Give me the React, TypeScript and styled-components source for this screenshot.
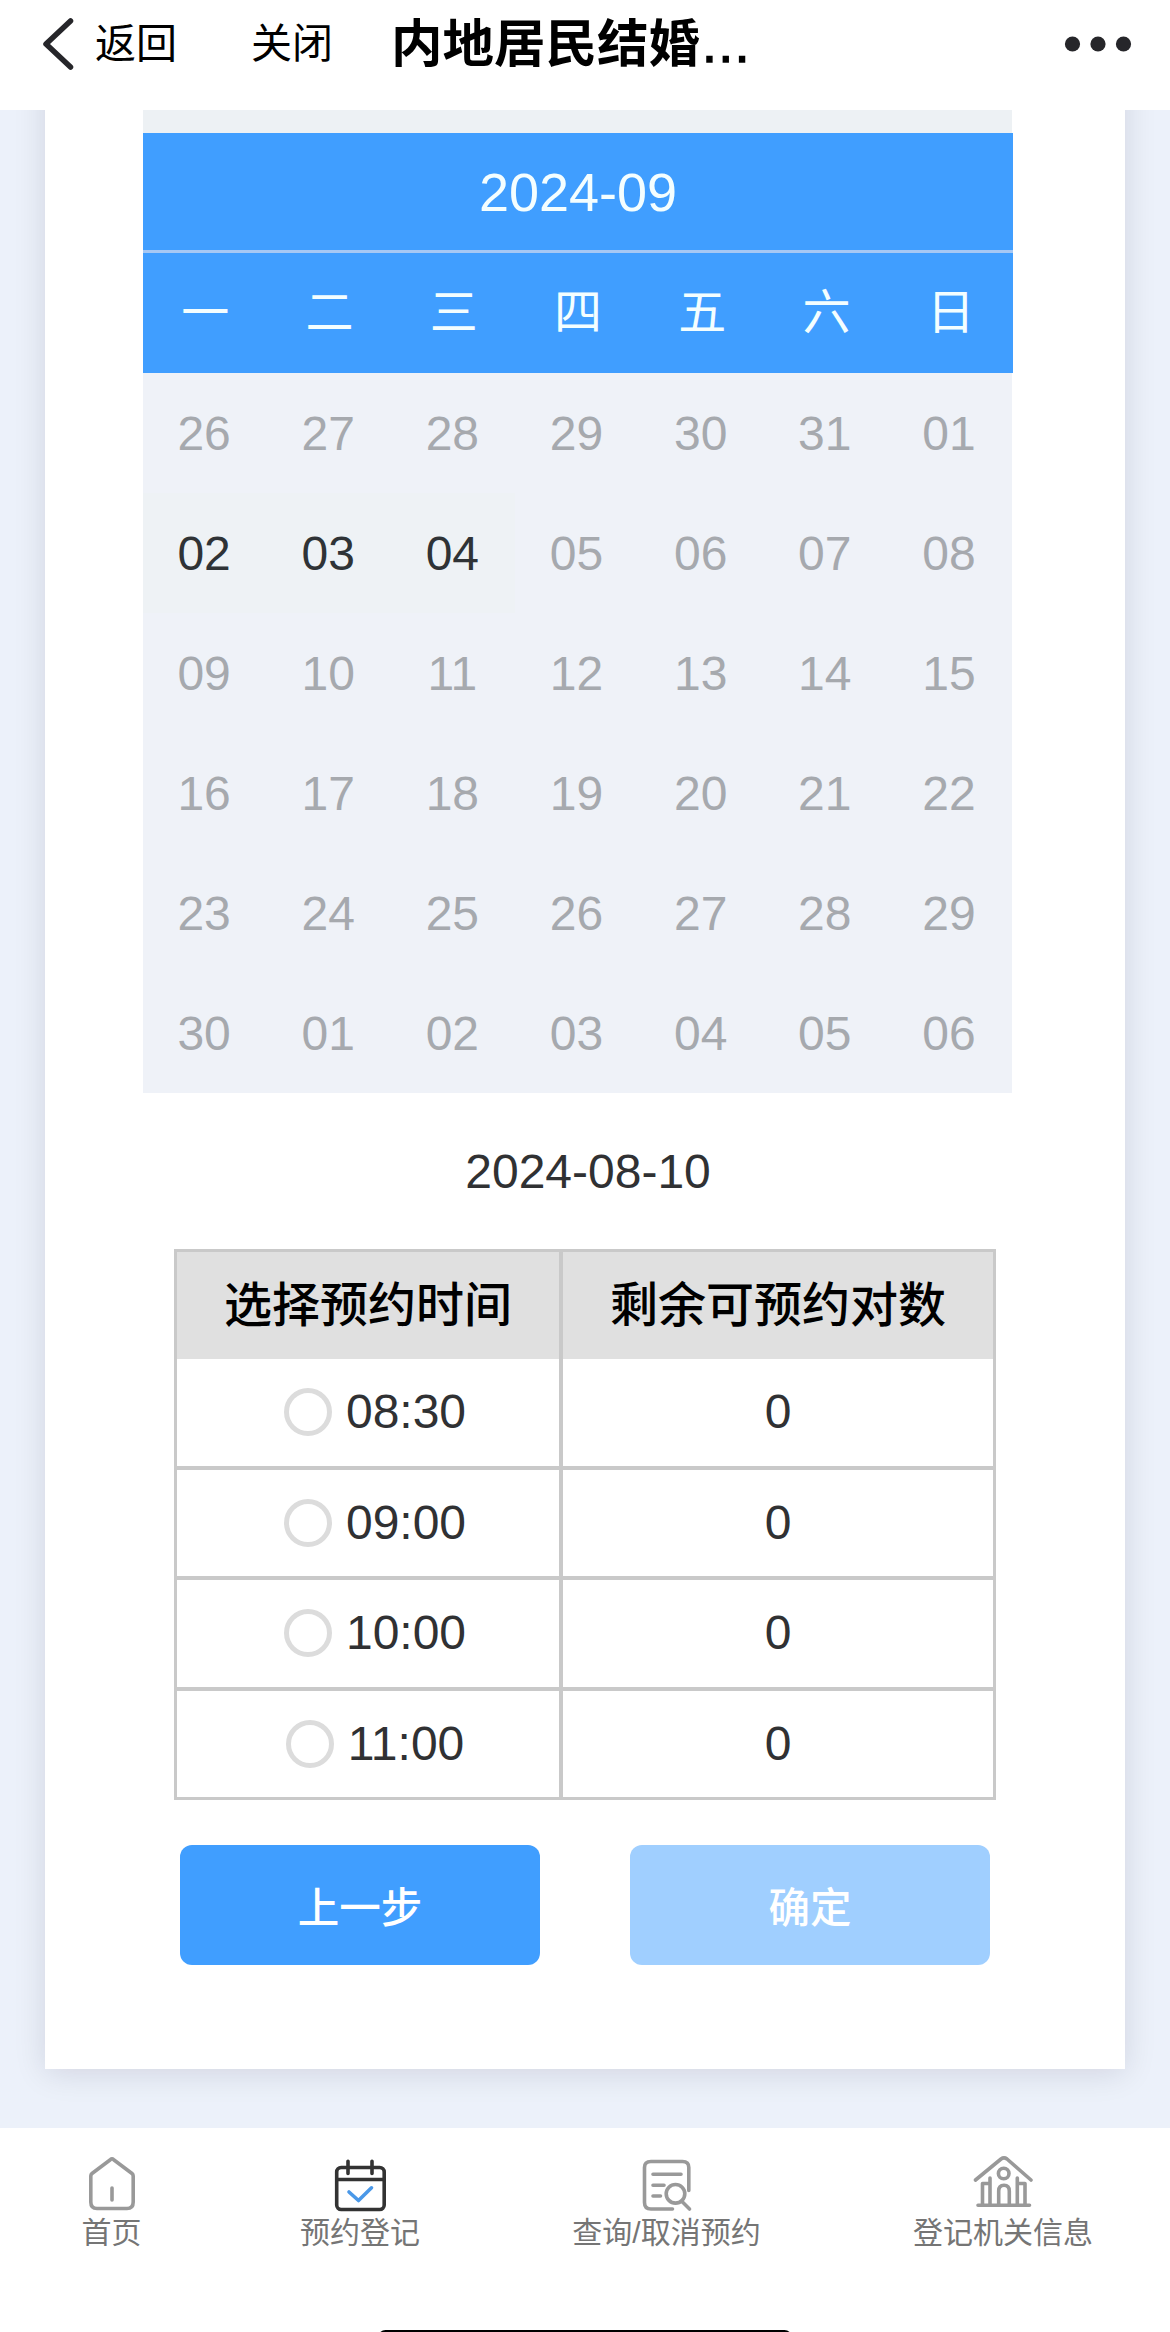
import React from "react";
import styled, { createGlobalStyle } from "styled-components";

const Global = createGlobalStyle`
  *, *::before, *::after { box-sizing: border-box; }
  body {
    margin: 0;
    background: #fff;
    font-family: "Liberation Sans", "Noto Sans CJK SC", sans-serif;
    color: #303133;
  }
`;

const Screen = styled.div`
  display: flex;
  flex-direction: column;
  width: 1170px;
  height: 2332px;
  overflow: hidden;
  background: #fff;
`;

const TopBar = styled.header`
  display: flex;
  align-items: center;
  flex: none;
  height: 110px;
  padding: 0 38px 22px 40px;
  color: #000;
`;

const TopLink = styled.span<{ $gap: number }>`
  margin-left: ${(p) => p.$gap}px;
  font-size: 41px;
  line-height: 60px;
  white-space: nowrap;
`;

const PageTitle = styled.h1`
  margin: 0 auto 0 58px;
  font-size: 51.5px;
  line-height: 60px;
  font-weight: 700;
  white-space: nowrap;
  span { font-weight: 400; -webkit-text-stroke: 1.5px #000; }
`;

const Main = styled.main`
  flex: none;
  height: 2018px;
  padding: 0 45px;
  overflow: hidden;
  background: #ecf1fa;
`;

const Card = styled.section`
  display: flex;
  flex-direction: column;
  height: 1999px;
  margin-top: -40px;
  padding: 40px 0 0;
  background: #fff;
  box-shadow: 0 4px 30px rgba(20, 10, 40, 0.12);
`;

const Calendar = styled.div`
  flex: none;
  width: 870px;
  margin-left: 98px;
`;

const PreviousMonth = styled.div`
  width: 869px;
  height: 23px;
  background: #edf1f4;
`;

const MonthTitle = styled.div`
  height: 120px;
  border-bottom: 3px solid #a6c8f4;
  background: #409eff;
  color: #f4feff;
  font-size: 54px;
  line-height: 118px;
  text-align: center;
`;

const Weekdays = styled.div`
  display: grid;
  grid-template-columns: repeat(7, 1fr);
  height: 120px;
  background: #409eff;
  color: #f4feff;
  font-size: 48px;
  line-height: 120px;
  text-align: center;
`;

const Days = styled.div`
  display: grid;
  grid-template-columns: repeat(7, 1fr);
  grid-auto-rows: 120px;
  width: 869px;
  background: #eff2f8;
`;

const Day = styled.div<{ $open: boolean }>`
  background: ${(p) => (p.$open ? "#eef2f5" : "transparent")};
  color: ${(p) => (p.$open ? "#2f3336" : "#a6a9ae")};
  font-size: 48px;
  line-height: 121px;
  text-align: center;
  padding-right: 2px;
`;

const ChosenDate = styled.div`
  flex: none;
  height: 156px;
  padding-left: 6px;
  font-size: 48px;
  line-height: 157px;
  text-align: center;
`;

const SlotTable = styled.div`
  flex: none;
  width: 822px;
  margin-left: 129px;
  border: 3px solid #c9c9c9;
`;

const SlotRow = styled.div<{ $head?: boolean; $last?: boolean }>`
  display: grid;
  grid-template-columns: 386px 430px;
  height: ${(p) => (p.$head ? 107 : p.$last ? 106 : 110.5)}px;
  background: ${(p) => (p.$head ? "#e0e0e0" : "#fff")};
  border-bottom: ${(p) => (p.$head || p.$last ? "0" : "4px solid #c9c9c9")};
`;

const Cell = styled.div<{ $divided?: boolean; $shift?: number }>`
  display: flex;
  align-items: center;
  justify-content: center;
  padding-left: ${(p) => p.$shift ?? 0}px;
  border-right: ${(p) => (p.$divided ? "4px solid #c9c9c9" : "0")};
  font-size: 48px;
  line-height: 60px;
`;

const HeadCell = styled(Cell)`
  color: #000;
  font-weight: 500;
`;

const Radio = styled.span`
  width: 48px;
  height: 48px;
  margin-right: 14px;
  border: 5px solid #dcdcdc;
  border-radius: 50%;
`;

const Actions = styled.div`
  display: flex;
  gap: 90px;
  margin: 45px 0 0 135px;
`;

const Button = styled.button<{ $disabled?: boolean }>`
  width: 360px;
  height: 120px;
  padding: 0;
  border: 0;
  border-radius: 12px;
  background: ${(p) => (p.$disabled ? "#a0cfff" : "#409eff")};
  color: #fff;
  font: 500 41.5px/120px "Noto Sans CJK SC", sans-serif;
`;

const TabBar = styled.nav`
  display: flex;
  align-items: flex-start;
  flex: none;
  gap: 151px;
  height: 202px;
  padding: 26px 0 0 74px;
`;

const Tab = styled.div<{ $width: number }>`
  display: flex;
  flex-direction: column;
  align-items: center;
  width: ${(p) => p.$width}px;
  color: #757575;
  font-size: 30px;
  line-height: 40px;
  white-space: nowrap;
  svg { display: block; margin-bottom: -1px; }
`;

const HomeIndicator = styled.div`
  flex: none;
  width: 414px;
  height: 15px;
  margin-left: 378px;
  border-radius: 8px;
  background: #000;
`;

const strokeProps = {
  fill: "none",
  strokeLinecap: "round" as const,
  strokeLinejoin: "round" as const,
};

const BackIcon = () => (
  <svg width="36" height="56" viewBox="0 0 36 56" {...strokeProps} stroke="#26262a" strokeWidth="5.5">
    <path d="M30.5 5 6 28l24.500 23" />
  </svg>
);

const MoreIcon = () => (
  <svg width="70" height="16" viewBox="0 0 70 16" fill="#26262a">
    <circle cx="10.500" cy="8" r="7.600" />
    <circle cx="36" cy="8" r="7.600" />
    <circle cx="61.500" cy="8" r="7.600" />
  </svg>
);

const HomeIcon = () => (
  <svg width="60" height="60" viewBox="0 0 60 60" {...strokeProps} stroke="#999" strokeWidth="3.600">
    <path d="M28.300 5.700Q30 4.200 31.700 5.700L50 19.500Q51.200 20.500 51.200 22V48Q51.200 54.500 45 54.500H15Q8.800 54.500 8.800 48V22Q8.800 20.500 10 19.500Z" />
    <path d="M30 34V46" />
  </svg>
);

const BookingIcon = () => (
  <svg width="60" height="60" viewBox="0 0 60 60" {...strokeProps} stroke="#333" strokeWidth="3.600">
    <rect x="6.700" y="13.500" width="47.500" height="42" rx="4.500" />
    <path d="M6.700 25.500H54.200M18 7.200V19.500M42 7.200V19.500" />
    <path d="M19 38 28.500 46.500 41.500 33.800" stroke="#4a98e8" />
  </svg>
);

const QueryIcon = () => (
  <svg width="60" height="60" viewBox="0 0 60 60" {...strokeProps} stroke="#999" strokeWidth="3.600">
    <path d="M35.500 55H14Q7.500 55 7.500 48.500V13.500Q7.500 7.500 14 7.500H45.500Q51.800 7.500 51.800 13.500V36.500" />
    <path d="M16 20.300H44M16 31.200H27M16 42H23.500" />
    <circle cx="38.500" cy="39.800" r="9.300" />
    <path d="M45 47.500 52.500 55" />
  </svg>
);

const OfficeIcon = () => (
  <svg width="60" height="60" viewBox="0 0 60 60" {...strokeProps} stroke="#999" strokeWidth="3.600">
    <path d="M2.500 26 28 5Q31 2.800 34 5L58 26" />
    <circle cx="30.700" cy="19.500" r="5.300" />
    <path d="M5 51.200H56.500M9.500 50.500V29.500H16.500M17 50.500V24M25.700 50.500V37Q25.700 31.300 31 31.300 36.300 31.300 36.300 37V50.500M44.300 50.500V24M45 29.500H52V50.500" />
  </svg>
);

const weekdays = ["一", "二", "三", "四", "五", "六", "日"];

const pad = (n: number) => String(n).padStart(2, "0");

// Six weeks starting on Monday, August 26th; September 2nd to 4th are open.
const days = Array.from({ length: 42 }, (_, i) => {
  const date = new Date(2024, 7, 26 + i);
  const inMonth = date.getMonth() === 8;
  const d = date.getDate();
  return { label: pad(d), open: inMonth && d >= 2 && d <= 4 };
});

const slots = [
  { time: "08:30", left: 0 },
  { time: "09:00", left: 0 },
  { time: "10:00", left: 0 },
  { time: "11:00", left: 0 },
];

const tabs = [
  { label: "首页", width: 75, Icon: HomeIcon },
  { label: "预约登记", width: 120, Icon: BookingIcon },
  { label: "查询/取消预约", width: 191, Icon: QueryIcon },
  { label: "登记机关信息", width: 180, Icon: OfficeIcon },
];

export default function App() {
  return (
    <>
      <Global />
      <Screen>
        <TopBar>
          <BackIcon />
          <TopLink $gap={19}>返回</TopLink>
          <TopLink $gap={74}>关闭</TopLink>
          <PageTitle>
            内地居民结婚<span>…</span>
          </PageTitle>
          <MoreIcon />
        </TopBar>
        <Main>
          <Card>
            <Calendar>
              <PreviousMonth />
              <MonthTitle>2024-09</MonthTitle>
              <Weekdays>
                {weekdays.map((w) => (
                  <span key={w}>{w}</span>
                ))}
              </Weekdays>
              <Days>
                {days.map((d, i) => (
                  <Day key={i} $open={d.open}>
                    {d.label}
                  </Day>
                ))}
              </Days>
            </Calendar>
            <ChosenDate>2024-08-10</ChosenDate>
            <SlotTable>
              <SlotRow $head>
                <HeadCell $divided>选择预约时间</HeadCell>
                <HeadCell>剩余可预约对数</HeadCell>
              </SlotRow>
              {slots.map((s, i) => (
                <SlotRow key={s.time} $last={i === slots.length - 1}>
                  <Cell $divided $shift={14}>
                    <Radio />
                    {s.time}
                  </Cell>
                  <Cell>{s.left}</Cell>
                </SlotRow>
              ))}
            </SlotTable>
            <Actions>
              <Button>上一步</Button>
              <Button $disabled>确定</Button>
            </Actions>
          </Card>
        </Main>
        <TabBar>
          {tabs.map(({ label, width, Icon }) => (
            <Tab key={label} $width={width}>
              <Icon />
              {label}
            </Tab>
          ))}
        </TabBar>
        <HomeIndicator />
      </Screen>
    </>
  );
}
